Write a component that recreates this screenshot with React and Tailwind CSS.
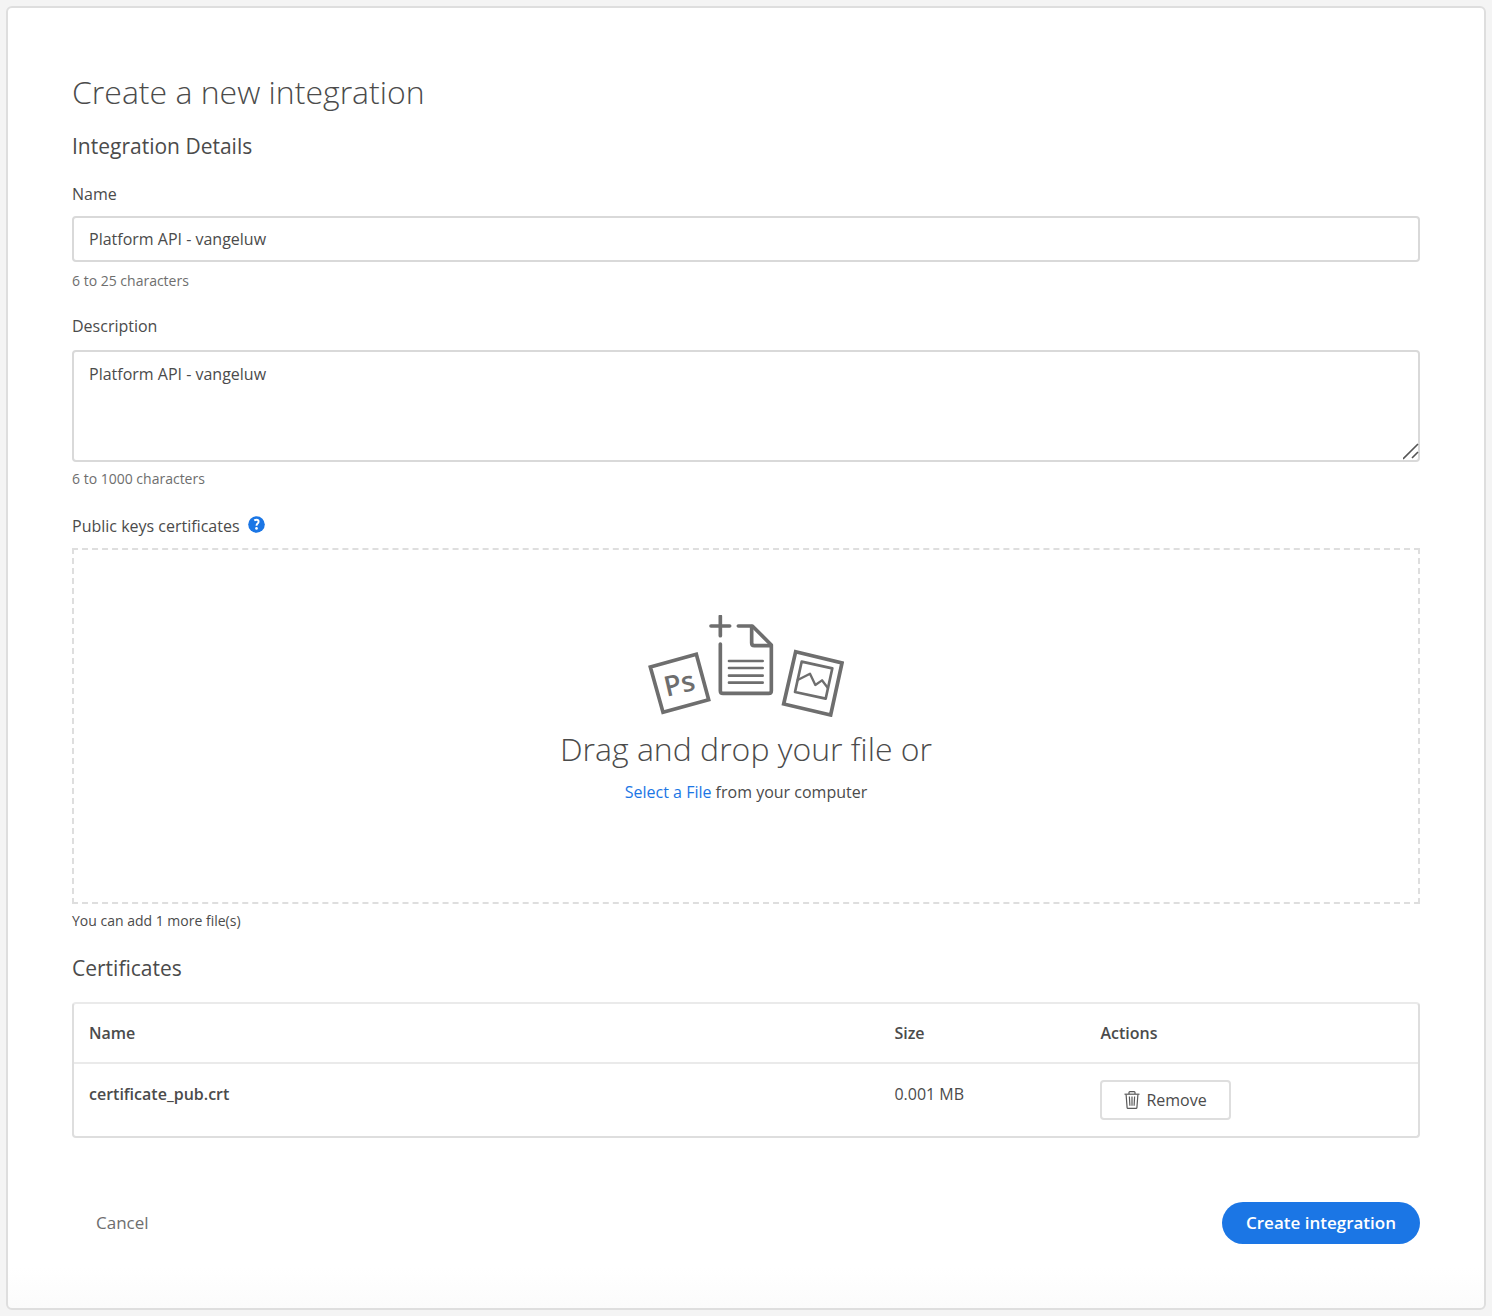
import React from "react";

function DropIllustration() {
  return (
    <svg
      width="196"
      height="102"
      viewBox="24 30 588 306"
      fill="none"
      stroke="#6e6e6e"
      strokeWidth="11"
      strokeLinecap="round"
      strokeLinejoin="round"
      aria-hidden="true"
    >
      <path d="M31 186 169 148 206 284 69 322Z" strokeLinejoin="miter" />
      <text
        x="119"
        y="265"
        transform="rotate(-13 120 240)"
        textAnchor="middle"
        fontSize="84"
        fontWeight="600"
        fill="#6e6e6e"
        stroke="none"
      >
        Ps
      </text>
      <path d="M241 34V92M213 63H269" />
      <path d="M295 63H337L394 120V257Q394 265 386 265H249Q241 265 241 257V117" />
      <path d="M335 65V114Q335 122 343 122H392" />
      <path d="M267 168H368M267 189H368M267 212H368M267 233H368" strokeWidth="8" />
      <path d="M467 140 606 174 572 330 431 297Z" strokeLinejoin="miter" />
      <path d="M485 170 577 190 557 281 465 261Z" strokeWidth="8" />
      <path d="M473 225 510 206 526 240 546 226 563 248" strokeWidth="7" />
    </svg>
  );
}

function TrashIcon() {
  return (
    <svg width="16" height="18" viewBox="0 0 16 18" fill="none" stroke="#5a5a5a" strokeWidth="1.2" aria-hidden="true">
      <path d="M0.5 3.2H15.5" />
      <path d="M5 3V1.6Q5 0.7 5.9 0.7H10.1Q11 0.7 11 1.6V3" />
      <path d="M2.1 3.5 3.1 16.6Q3.2 17.3 3.9 17.3H12.1Q12.8 17.3 12.9 16.6L13.9 3.5" />
      <path d="M5.4 5.5 5.9 14.8M8 5.5V14.8M10.6 5.5 10.1 14.8" />
    </svg>
  );
}

function HelpIcon() {
  return (
    <svg width="17" height="17" viewBox="0 0 17 17" aria-hidden="true">
      <circle cx="8.5" cy="8.5" r="8.3" fill="#1b76e5" />
      <path
        d="M6.3 4.5Q7.2 3.8 8.5 3.8Q10.6 3.8 10.6 5.7Q10.6 6.7 9.6 7.6Q8.5 8.5 8.5 9.8"
        fill="none"
        stroke="#fff"
        strokeWidth="1.9"
      />
      <circle cx="8.5" cy="12.4" r="1.3" fill="#fff" />
    </svg>
  );
}

const field =
  "block w-full rounded border-2 border-[#d9d9d9] bg-white px-[15px] text-base text-[#4b4b4b] outline-none focus:border-[#1b76e5]";

export default function App() {
  return (
    <div className="bg-[#f4f4f4] p-1.5 font-['Open_Sans',sans-serif] text-base leading-6 text-[#4b4b4b]">
      <main className="rounded-md border-2 border-[#dedede] bg-[linear-gradient(to_top,#fbfbfb,#ffffff_40px)] px-16 pb-16 pt-[60px]">
        <form onSubmit={(e) => e.preventDefault()}>
          <h1 className="text-[32px] font-light leading-[48px]">Create a new integration</h1>
          <h2 className="mt-3.5 text-[21px] leading-8">Integration Details</h2>

          <label htmlFor="name" className="mt-5 block">Name</label>
          <input id="name" type="text" defaultValue="Platform API - vangeluw" className={`${field} mt-2.5 h-[46px]`} />
          <p className="mt-[9px] text-sm leading-5 text-[#6e6e6e]">6 to 25 characters</p>

          <label htmlFor="description" className="mt-[23px] block">Description</label>
          <div className="relative mt-3">
            <textarea
              id="description"
              defaultValue="Platform API - vangeluw"
              className={`${field} h-28 resize-none py-2.5 leading-6`}
            />
            <svg
              className="pointer-events-none absolute bottom-0.5 right-0"
              width="17"
              height="17"
              viewBox="0 0 17 17"
              stroke="#555"
              strokeWidth="1.6"
              aria-hidden="true"
            >
              <path d="M0 16 15 1M9 15 15 9" />
            </svg>
          </div>
          <p className="mt-[7px] text-sm leading-5 text-[#6e6e6e]">6 to 1000 characters</p>

          <div className="mt-[25px] flex items-center gap-2">
            <label htmlFor="certificate">Public keys certificates</label>
            <button type="button" aria-label="Help" className="pb-1">
              <HelpIcon />
            </button>
          </div>
          <div className="mt-2.5 flex h-[356px] flex-col items-center border-2 border-dashed border-[#dedede] pt-[65px]">
            <DropIllustration />
            <p className="mt-2 text-[32px] font-light leading-[48px]">Drag and drop your file or</p>
            <p className="mt-[7px]">
              <a href="#certificate" className="text-[#1b76e5]">Select a File</a> from your computer
            </p>
            <input id="certificate" type="file" className="sr-only" />
          </div>
          <p className="mt-[7px] text-sm leading-5">You can add 1 more file(s)</p>

          <h2 className="mt-[21px] text-[21px] leading-8">Certificates</h2>
          <div className="mt-[18px] rounded border-2 border-[#dedede] border-t-[#eaeaea]">
            <table className="w-full table-fixed text-left">
              <thead>
                <tr className="h-[59px] border-b-2 border-[#eaeaea]">
                  <th className="w-3/5 px-[15px] font-semibold">Name</th>
                  <th className="w-[206px] px-3.5 font-semibold">Size</th>
                  <th className="px-3.5 font-semibold">Actions</th>
                </tr>
              </thead>
              <tbody>
                <tr className="align-top">
                  <th scope="row" className="px-[15px] pt-[18px] font-semibold">certificate_pub.crt</th>
                  <td className="px-3.5 pt-[18px]">0.001 MB</td>
                  <td className="px-3.5 py-4">
                    <button
                      type="button"
                      className="flex h-10 items-center gap-1.5 rounded border-2 border-[#dedede] px-[22px] text-base"
                    >
                      <TrashIcon />
                      Remove
                    </button>
                  </td>
                </tr>
              </tbody>
            </table>
          </div>

          <div className="mt-16 flex items-center justify-between">
            <button type="button" className="px-6 text-[17px] leading-[42px] text-[#6e6e6e]">Cancel</button>
            <button
              type="submit"
              className="rounded-full bg-[#1b76e5] px-6 text-[17px] font-semibold leading-[42px] text-white"
            >
              Create integration
            </button>
          </div>
        </form>
      </main>
    </div>
  );
}
